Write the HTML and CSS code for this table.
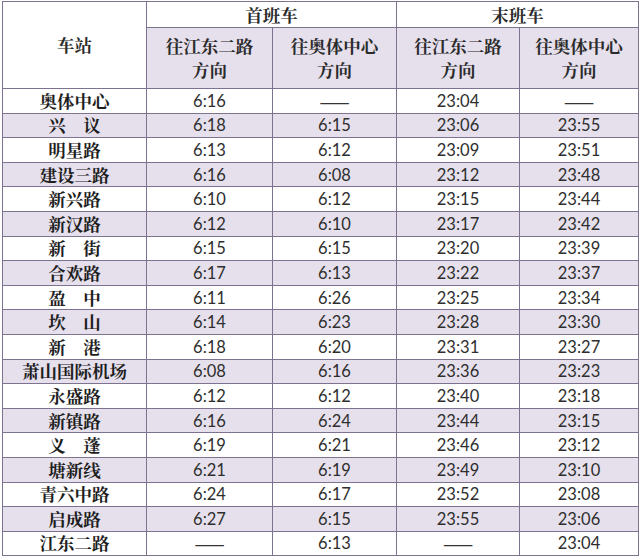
FILE: index.html
```html
<!DOCTYPE html>
<html lang="zh-CN">
<head>
<meta charset="utf-8">
<link rel="stylesheet" href="styles.css">
</head>
<body>
<table class="tt">
  <colgroup>
    <col class="c1"><col class="c2"><col class="c3"><col class="c4"><col class="c5">
  </colgroup>
  <thead>
    <tr class="h1">
      <th rowspan="2" class="st-head">车站</th>
      <th colspan="2">首班车</th>
      <th colspan="2">末班车</th>
    </tr>
    <tr class="h2">
      <th>往江东二路<br>方向</th>
      <th>往奥体中心<br>方向</th>
      <th>往江东二路<br>方向</th>
      <th>往奥体中心<br>方向</th>
    </tr>
  </thead>
  <tbody>
    <tr><td class="st">奥体中心</td><td>6:16</td><td class="dash">——</td><td>23:04</td><td class="dash">——</td></tr>
    <tr class="alt"><td class="st">兴　议</td><td>6:18</td><td>6:15</td><td>23:06</td><td>23:55</td></tr>
    <tr><td class="st">明星路</td><td>6:13</td><td>6:12</td><td>23:09</td><td>23:51</td></tr>
    <tr class="alt"><td class="st">建设三路</td><td>6:16</td><td>6:08</td><td>23:12</td><td>23:48</td></tr>
    <tr><td class="st">新兴路</td><td>6:10</td><td>6:12</td><td>23:15</td><td>23:44</td></tr>
    <tr class="alt"><td class="st">新汉路</td><td>6:12</td><td>6:10</td><td>23:17</td><td>23:42</td></tr>
    <tr><td class="st">新　街</td><td>6:15</td><td>6:15</td><td>23:20</td><td>23:39</td></tr>
    <tr class="alt"><td class="st">合欢路</td><td>6:17</td><td>6:13</td><td>23:22</td><td>23:37</td></tr>
    <tr><td class="st">盈　中</td><td>6:11</td><td>6:26</td><td>23:25</td><td>23:34</td></tr>
    <tr class="alt"><td class="st">坎　山</td><td>6:14</td><td>6:23</td><td>23:28</td><td>23:30</td></tr>
    <tr><td class="st">新　港</td><td>6:18</td><td>6:20</td><td>23:31</td><td>23:27</td></tr>
    <tr class="alt"><td class="st">萧山国际机场</td><td>6:08</td><td>6:16</td><td>23:36</td><td>23:23</td></tr>
    <tr><td class="st">永盛路</td><td>6:12</td><td>6:12</td><td>23:40</td><td>23:18</td></tr>
    <tr class="alt"><td class="st">新镇路</td><td>6:16</td><td>6:24</td><td>23:44</td><td>23:15</td></tr>
    <tr><td class="st">义　蓬</td><td>6:19</td><td>6:21</td><td>23:46</td><td>23:12</td></tr>
    <tr class="alt"><td class="st">塘新线</td><td>6:21</td><td>6:19</td><td>23:49</td><td>23:10</td></tr>
    <tr><td class="st">青六中路</td><td>6:24</td><td>6:17</td><td>23:52</td><td>23:08</td></tr>
    <tr class="alt"><td class="st">启成路</td><td>6:27</td><td>6:15</td><td>23:55</td><td>23:06</td></tr>
    <tr><td class="st">江东二路</td><td class="dash">——</td><td>6:13</td><td class="dash">——</td><td>23:04</td></tr>
  </tbody>
</table>
</body>
</html>
```

FILE: styles.css
```css
html, body {
  margin: 0;
  padding: 0;
  background: #ffffff;
}

.tt {
  margin: 1px 0 0 2px;
  width: 636px;
  border-collapse: collapse;
  table-layout: fixed;
  font-family: "Lato", "Carlito", "Liberation Sans", sans-serif;
  color: #2e2e2e;
}

.c1 { width: 144px; }
.c2 { width: 126px; }
.c3 { width: 124px; }
.c4 { width: 123px; }
.c5 { width: 119px; }

.tt th,
.tt td {
  border: 1px solid #7d7290;
  text-align: center;
  vertical-align: middle;
  padding: 0;
}

.tt th {
  font-family: "Noto Serif CJK SC", "Noto Sans CJK SC", serif;
  font-weight: 700;
  font-size: 17.5px;
  color: #2b2b2b;
  line-height: 24px;
}

.h1 { height: 26px; }
.h2 { height: 61px; }
.h2 th { background: #e6e0ed; }

.tt td {
  height: 23.6px;
  font-size: 16.5px;
  line-height: 20px;
}

.tt td.st {
  font-family: "Noto Serif CJK SC", "Noto Sans CJK SC", serif;
  font-weight: 700;
  font-size: 17.5px;
  color: #1e1e1e;
}

.tt td.dash {
  font-family: "Noto Sans CJK SC", sans-serif;
  font-size: 18px;
  letter-spacing: 0;
  color: #333333;
}

.tt tr.alt td {
  background: #e6e0ed;
}
```
